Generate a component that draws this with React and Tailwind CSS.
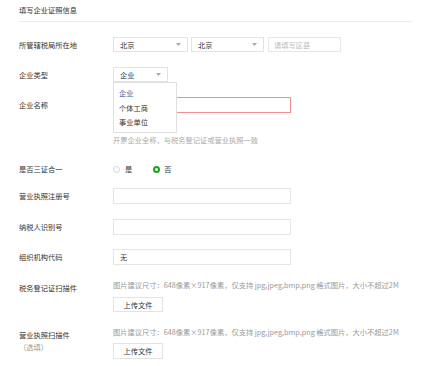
import React from "react";

const font = { fontFamily: '"Noto Sans CJK SC", "Noto Sans", sans-serif' };

function Arrow() {
  return (
    <svg width="5" height="3" viewBox="0 0 5 3" className="shrink-0">
      <path d="M0 0 L5 0 L2.5 3 Z" fill="#aaa" />
    </svg>
  );
}

function Select({ value, width }) {
  return (
    <div
      className={"flex h-full items-center justify-between border border-[#e3e3e3] pl-[6px] pr-[6px] text-[#333] " + width}
    >
      <span>{value}</span>
      <Arrow />
    </div>
  );
}

function Label({ children }) {
  return <div className="w-[94px] shrink-0 text-[#333]">{children}</div>;
}

function Input({ value, red }) {
  return (
    <div
      className={
        "flex h-full w-[178px] items-center px-[6px] text-[#333] " +
        (red ? "border border-[#ef9191]" : "border border-[#e6e6e6]")
      }
    >
      {value}
    </div>
  );
}

export default function App() {
  return (
    <div className="relative h-[366px] w-[430px] overflow-hidden bg-white pl-[19px] text-[7.25px] leading-[10px]" style={font}>
      <div className="flex h-[22px] w-[393px] items-center border-b border-[#ececec] pb-[1px] text-[#333]">
        填写企业证照信息
      </div>

      {/* 所管辖税局所在地 */}
      <div className="mt-[15px] flex h-[15px] items-center">
        <Label>所管辖税局所在地</Label>
        <Select value="北京" width="w-[75px]" />
        <div className="ml-[3px] h-full">
          <Select value="北京" width="w-[73px]" />
        </div>
        <div className="ml-[4px] flex h-full w-[73px] items-center border border-[#e6e6e6] px-[5px] text-[#bbb]">
          请填写区县
        </div>
      </div>

      {/* 企业类型 */}
      <div className="mt-[15px] flex h-[15px] items-center">
        <Label>企业类型</Label>
        <div className="relative h-full">
          <Select value="企业" width="w-[55px]" />
          <div className="absolute left-0 top-[15px] z-10 flex h-[51px] w-[64px] flex-col border border-[#e0e0e0] bg-white pl-[5px] pt-[5px]">
            <div className="h-[10px] text-[#2a5ca8]">企业</div>
            <div className="mt-[5px] h-[10px] text-[#333]">个体工商</div>
            <div className="mt-[4px] h-[10px] text-[#333]">事业单位</div>
          </div>
        </div>
      </div>

      {/* 企业名称 */}
      <div className="mt-[15px] flex h-[16px] items-center">
        <Label>企业名称</Label>
        <Input red />
      </div>
      <div className="mt-[22px] flex h-[10px] items-center">
        <div className="w-[94px] shrink-0" />
        <div className="text-[#aaa]">开票企业全称，与税务登记证或营业执照一致</div>
      </div>

      {/* 是否三证合一 */}
      <div className="mt-[19px] flex h-[10px] items-center">
        <Label>是否三证合一</Label>
        <div className="flex items-center">
          <span className="h-[7px] w-[7px] rounded-full border border-[#d4d4d4]" />
          <span className="ml-[5px] text-[#333]">是</span>
          <span className="ml-[21px] h-[7px] w-[7px] rounded-full border-2 border-[#18a518]" />
          <span className="ml-[4px] text-[#333]">否</span>
        </div>
      </div>

      <div className="mt-[14px] flex h-[16px] items-center">
        <Label>营业执照注册号</Label>
        <Input />
      </div>
      <div className="mt-[15px] flex h-[16px] items-center">
        <Label>纳税人识别号</Label>
        <Input />
      </div>
      <div className="mt-[14px] flex h-[16px] items-center">
        <Label>组织机构代码</Label>
        <Input value="无" />
      </div>

      {/* 税务登记证扫描件 */}
      <div className="mt-[15px] flex">
        <div className="mt-[3px]">
          <Label>税务登记证扫描件</Label>
        </div>
        <div className="flex flex-col">
          <div className="h-[10px] text-[#999]">
            图片建议尺寸：648像素×917像素，仅支持 jpg,jpeg,bmp,png 格式图片，大小不超过2M
          </div>
          <div className="mt-[7px] flex h-[15px] w-[50px] items-center justify-center border border-[#e3e3e3] text-[#333]">
            上传文件
          </div>
        </div>
      </div>

      {/* 营业执照扫描件 */}
      <div className="mt-[15px] flex">
        <div className="mt-[3px] flex w-[94px] shrink-0 flex-col">
          <div className="h-[10px] text-[#333]">营业执照扫描件</div>
          <div className="mt-[2px] h-[10px] text-[#999]">（选填）</div>
        </div>
        <div className="flex flex-col">
          <div className="h-[10px] text-[#999]">
            图片建议尺寸：648像素×917像素，仅支持 jpg,jpeg,bmp,png 格式图片，大小不超过2M
          </div>
          <div className="mt-[6px] flex h-[16px] w-[50px] items-center justify-center border border-[#e3e3e3] text-[#333]">
            上传文件
          </div>
        </div>
      </div>
    </div>
  );
}
